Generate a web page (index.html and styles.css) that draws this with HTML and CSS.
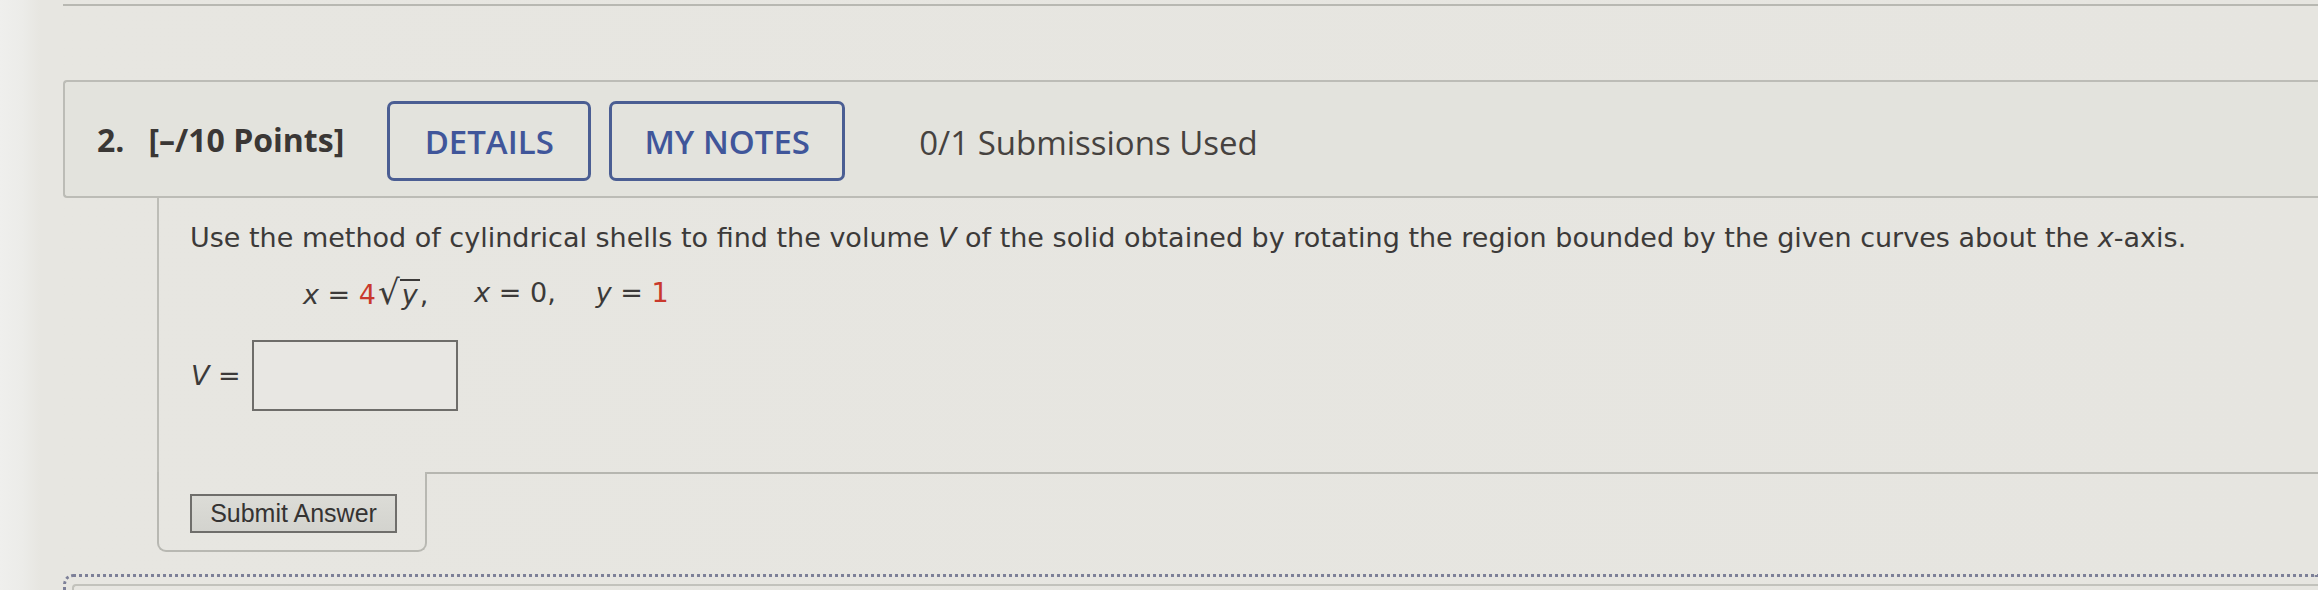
FILE: index.html
```html
<!DOCTYPE html>
<html>
<head>
<meta charset="utf-8">
<link rel="stylesheet" href="styles.css">
</head>
<body>
<div class="page">
  <div class="prev"></div>
  <div class="header">
    <span class="qnum">2.</span>
    <span class="points">[–/10 Points]</span>
    <span class="btn btn-details">DETAILS</span>
    <span class="btn btn-notes">MY NOTES</span>
    <span class="subs">0/1 Submissions Used</span>
  </div>
  <div class="qbody">
    <p class="prompt">Use the method of cylindrical shells to find the volume <i>V</i> of the solid obtained by rotating the region bounded by the given curves about the <i>x</i>-axis.</p>
    <div class="eq">
      <span class="term"><i>x</i> = <span class="red">4</span><span class="sqrt">√</span><span class="rad"><i>y</i></span>,</span>
      <span class="term term-2"><i>x</i> = 0,</span>
      <span class="term"><i>y</i> = <span class="red">1</span></span>
    </div>
    <div class="answer">
      <span class="vlabel"><i>V</i> =</span>
      <span class="inputbox"></span>
    </div>
  </div>
  <div class="bottom">
    <div class="submit-cell"><span class="submit">Submit Answer</span></div>
    <div class="after"></div>
  </div>
  <div class="next"><div class="next-inner"></div></div>
</div>
</body>
</html>
```
FILE: styles.css
```css
html, body {
  margin: 0;
  padding: 0;
  overflow: hidden;
}
body {
  width: 2318px;
  height: 590px;
  background: linear-gradient(to right, #efefed 0, #ecece9 22px, #e7e6e1 40px, #e6e5e0 100%);
  font-family: "DejaVu Sans", Verdana, sans-serif;
  color: #3c3a39;
}
.page {
  padding-left: 63px;
}
.prev {
  height: 4px;
  border-bottom: 2px solid #b8b8b2;
}
.header {
  margin-top: 74px;
  height: 114px;
  border: 2px solid #bcbcb6;
  border-right: none;
  border-radius: 4px 0 0 4px;
  background: #e3e3dd;
  display: flex;
  align-items: center;
  padding-left: 32px;
  font-family: "Open Sans", sans-serif;
  color: #3a3735;
}
.qnum {
  font-weight: 700;
  font-size: 32px;
  margin-right: 24px;
}
.points {
  font-weight: 700;
  font-size: 32px;
}
.btn {
  box-sizing: border-box;
  height: 80px;
  border: 3px solid #4b5e93;
  border-radius: 7px;
  display: flex;
  align-items: center;
  justify-content: center;
  font-weight: 600;
  font-size: 33px;
  color: #40569a;
  margin-top: 4px;
}
.btn-details {
  width: 204px;
  margin-left: 43px;
}
.btn-notes {
  width: 236px;
  margin-left: 18px;
}
.subs {
  font-size: 33px;
  margin-left: 74px;
  color: #46423f;
  margin-top: 6px;
}
.qbody {
  margin-left: 94px;
  border-left: 2px solid #bdbdb7;
  padding-left: 31px;
  padding-top: 24px;
  height: 274px;
  box-sizing: border-box;
}
.prompt {
  margin: 0;
  font-size: 27px;
  line-height: 31px;
  white-space: nowrap;
}
.eq {
  margin-top: 24px;
  padding-left: 113px;
  font-size: 27px;
  line-height: 31px;
  display: flex;
  white-space: nowrap;
}
.term {
  margin-right: 46px;
}
.term-2 {
  margin-right: 40px;
}
.red {
  color: #c9392c;
}
.sqrt {
  font-size: 34px;
  margin-left: 2px;
  line-height: 31px;
}
.rad {
  display: inline-block;
  border-top: 2px solid #3c3a39;
  line-height: 27px;
  padding: 0 2px;
}
.answer {
  margin-top: 30px;
  display: flex;
  align-items: center;
  font-size: 27px;
}
.vlabel {
  margin-right: 11px;
  margin-left: 1px;
}
.inputbox {
  width: 206px;
  height: 71px;
  box-sizing: border-box;
  border: 2px solid #6e6d6a;
  background: #e8e7e3;
}
.bottom {
  margin-left: 94px;
  display: flex;
  height: 80px;
}
.submit-cell {
  box-sizing: border-box;
  width: 270px;
  border: 2px solid #b8b8b2;
  border-top: none;
  border-radius: 0 0 9px 9px;
  padding-left: 31px;
  padding-top: 22px;
}
.submit {
  box-sizing: border-box;
  display: flex;
  align-items: center;
  justify-content: center;
  width: 207px;
  height: 39px;
  border: 2px solid #6f6e6b;
  background: linear-gradient(#dcdcd7, #d3d3ce);
  font-family: "Liberation Sans", Arial, sans-serif;
  font-size: 25px;
  color: #353332;
}
.after {
  flex: 1;
  border-top: 2px solid #b6b6b0;
}
.next {
  margin-top: 22px;
  height: 8px;
  border-top: 3px dotted #7d8098;
  border-left: 3px dotted #7d8098;
  border-radius: 10px 0 0 0;
  padding-left: 6px;
  padding-top: 7px;
}
.next-inner {
  height: 6px;
  border-top: 2px solid #c2c2bc;
  border-left: 2px solid #c2c2bc;
  border-radius: 4px 0 0 0;
}
```
